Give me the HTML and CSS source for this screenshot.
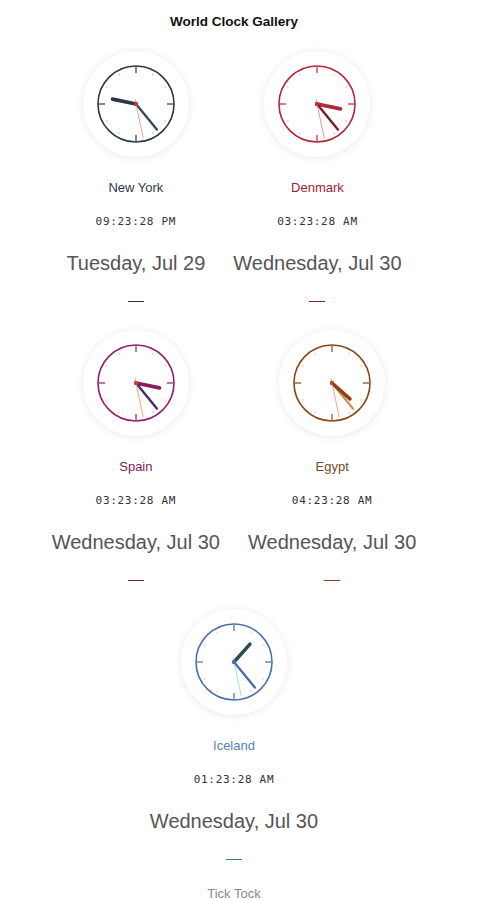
FILE: index.html
```html
<!DOCTYPE html>
<html lang="en">
<head>
<meta charset="utf-8">
<title>World Clock Gallery</title>
<link rel="stylesheet" href="styles.css">
</head>
<body>
<main class="page">
  <h1 class="title">World Clock Gallery</h1>
  <section class="gallery">

    <article class="card ny">
      <div class="clock">
        <svg class="dial" width="78" height="78" viewBox="-39 -39 78 78">
          <circle class="face" r="38"/>
          <g class="major"><line y1="-31" y2="-37"/><line y1="-31" y2="-37" transform="rotate(90)"/><line y1="-31" y2="-37" transform="rotate(180)"/><line y1="-31" y2="-37" transform="rotate(270)"/></g>
          <g class="minor"><line y1="-33" y2="-35" transform="rotate(30)"/><line y1="-33" y2="-35" transform="rotate(60)"/><line y1="-33" y2="-35" transform="rotate(120)"/><line y1="-33" y2="-35" transform="rotate(150)"/><line y1="-33" y2="-35" transform="rotate(210)"/><line y1="-33" y2="-35" transform="rotate(240)"/><line y1="-33" y2="-35" transform="rotate(300)"/><line y1="-33" y2="-35" transform="rotate(330)"/></g>
          <line class="hour" y2="-24" transform="rotate(281.7)"/>
          <line class="minute" y2="-33" transform="rotate(140.8)"/>
          <line class="second" y1="5" y2="-35" transform="rotate(168)"/>
          <circle class="pin" r="2.2"/>
        </svg>
      </div>
      <div class="name">New York</div>
      <div class="time">09:23:28 PM</div>
      <div class="date">Tuesday, Jul 29</div>
      <div class="dash"></div>
    </article>

    <article class="card dk">
      <div class="clock">
        <svg class="dial" width="78" height="78" viewBox="-39 -39 78 78">
          <circle class="face" r="38"/>
          <g class="major"><line y1="-31" y2="-37"/><line y1="-31" y2="-37" transform="rotate(90)"/><line y1="-31" y2="-37" transform="rotate(180)"/><line y1="-31" y2="-37" transform="rotate(270)"/></g>
          <g class="minor"><line y1="-33" y2="-35" transform="rotate(30)"/><line y1="-33" y2="-35" transform="rotate(60)"/><line y1="-33" y2="-35" transform="rotate(120)"/><line y1="-33" y2="-35" transform="rotate(150)"/><line y1="-33" y2="-35" transform="rotate(210)"/><line y1="-33" y2="-35" transform="rotate(240)"/><line y1="-33" y2="-35" transform="rotate(300)"/><line y1="-33" y2="-35" transform="rotate(330)"/></g>
          <line class="hour" y2="-24" transform="rotate(101.7)"/>
          <line class="minute" y2="-33" transform="rotate(140.8)"/>
          <line class="second" y1="5" y2="-35" transform="rotate(168)"/>
          <circle class="pin" r="2.2"/>
        </svg>
      </div>
      <div class="name">Denmark</div>
      <div class="time">03:23:28 AM</div>
      <div class="date">Wednesday, Jul 30</div>
      <div class="dash"></div>
    </article>

    <article class="card es">
      <div class="clock">
        <svg class="dial" width="78" height="78" viewBox="-39 -39 78 78">
          <circle class="face" r="38"/>
          <g class="major"><line y1="-31" y2="-37"/><line y1="-31" y2="-37" transform="rotate(90)"/><line y1="-31" y2="-37" transform="rotate(180)"/><line y1="-31" y2="-37" transform="rotate(270)"/></g>
          <g class="minor"><line y1="-33" y2="-35" transform="rotate(30)"/><line y1="-33" y2="-35" transform="rotate(60)"/><line y1="-33" y2="-35" transform="rotate(120)"/><line y1="-33" y2="-35" transform="rotate(150)"/><line y1="-33" y2="-35" transform="rotate(210)"/><line y1="-33" y2="-35" transform="rotate(240)"/><line y1="-33" y2="-35" transform="rotate(300)"/><line y1="-33" y2="-35" transform="rotate(330)"/></g>
          <line class="hour" y2="-24" transform="rotate(101.7)"/>
          <line class="minute" y2="-33" transform="rotate(140.8)"/>
          <line class="second" y1="5" y2="-35" transform="rotate(168)"/>
          <circle class="pin" r="2.2"/>
        </svg>
      </div>
      <div class="name">Spain</div>
      <div class="time">03:23:28 AM</div>
      <div class="date">Wednesday, Jul 30</div>
      <div class="dash"></div>
    </article>

    <article class="card eg">
      <div class="clock">
        <svg class="dial" width="78" height="78" viewBox="-39 -39 78 78">
          <circle class="face" r="38"/>
          <g class="major"><line y1="-31" y2="-37"/><line y1="-31" y2="-37" transform="rotate(90)"/><line y1="-31" y2="-37" transform="rotate(180)"/><line y1="-31" y2="-37" transform="rotate(270)"/></g>
          <g class="minor"><line y1="-33" y2="-35" transform="rotate(30)"/><line y1="-33" y2="-35" transform="rotate(60)"/><line y1="-33" y2="-35" transform="rotate(120)"/><line y1="-33" y2="-35" transform="rotate(150)"/><line y1="-33" y2="-35" transform="rotate(210)"/><line y1="-33" y2="-35" transform="rotate(240)"/><line y1="-33" y2="-35" transform="rotate(300)"/><line y1="-33" y2="-35" transform="rotate(330)"/></g>
          <line class="minute" y2="-33" transform="rotate(140.8)"/>
          <line class="hour" y2="-24" transform="rotate(131.7)"/>
          <line class="second" y1="5" y2="-35" transform="rotate(168)"/>
          <circle class="pin" r="2.2"/>
        </svg>
      </div>
      <div class="name">Egypt</div>
      <div class="time">04:23:28 AM</div>
      <div class="date">Wednesday, Jul 30</div>
      <div class="dash"></div>
    </article>

    <article class="card is">
      <div class="clock">
        <svg class="dial" width="78" height="78" viewBox="-39 -39 78 78">
          <circle class="face" r="38"/>
          <g class="major"><line y1="-31" y2="-37"/><line y1="-31" y2="-37" transform="rotate(90)"/><line y1="-31" y2="-37" transform="rotate(180)"/><line y1="-31" y2="-37" transform="rotate(270)"/></g>
          <g class="minor"><line y1="-33" y2="-35" transform="rotate(30)"/><line y1="-33" y2="-35" transform="rotate(60)"/><line y1="-33" y2="-35" transform="rotate(120)"/><line y1="-33" y2="-35" transform="rotate(150)"/><line y1="-33" y2="-35" transform="rotate(210)"/><line y1="-33" y2="-35" transform="rotate(240)"/><line y1="-33" y2="-35" transform="rotate(300)"/><line y1="-33" y2="-35" transform="rotate(330)"/></g>
          <line class="hour" y2="-24" transform="rotate(41.7)"/>
          <line class="minute" y2="-33" transform="rotate(140.8)"/>
          <line class="second" y1="5" y2="-35" transform="rotate(168)"/>
          <circle class="pin" r="2.2"/>
        </svg>
      </div>
      <div class="name">Iceland</div>
      <div class="time">01:23:28 AM</div>
      <div class="date">Wednesday, Jul 30</div>
      <div class="dash"></div>
    </article>

  </section>
  <footer class="footer">Tick Tock</footer>
</main>
</body>
</html>
```

FILE: styles.css
```css
html, body {
  margin: 0;
  padding: 0;
  background: #ffffff;
}

body {
  font-family: "Liberation Sans", Arial, sans-serif;
  color: #333333;
  overflow: hidden;
}

.page {
  width: 468px;
  text-align: center;
}

.title {
  margin: 0;
  padding-top: 14px;
  font-size: 13.5px;
  line-height: 16px;
  font-weight: bold;
  color: #111111;
}

.gallery {
  margin-top: 21px;
  display: flex;
  flex-wrap: wrap;
  justify-content: center;
}

.card {
  display: flex;
  flex-direction: column;
  align-items: center;
  padding: 0 14px 28px;
}

.clock {
  width: 106px;
  height: 106px;
  border-radius: 50%;
  background: #ffffff;
  box-shadow: 0 1px 9px rgba(0, 0, 0, 0.09);
  display: flex;
  align-items: center;
  justify-content: center;
}

.dial {
  display: block;
  overflow: visible;
}

.face {
  fill: #ffffff;
  stroke: var(--rim);
  stroke-width: 1.6;
}

.major line {
  stroke: var(--rim);
  stroke-width: 2;
  opacity: 0.6;
}

.minor line {
  stroke: var(--rim);
  stroke-width: 1;
  opacity: 0.3;
}

.hour {
  stroke: var(--hour);
  stroke-width: 3.6;
  stroke-linecap: round;
}

.minute {
  stroke: var(--minute);
  stroke-width: 2.4;
  stroke-linecap: round;
}

.second {
  stroke: var(--second);
  stroke-width: 1;
}

.pin {
  fill: var(--pin);
}

.name {
  margin-top: 23px;
  font-size: 13px;
  line-height: 16px;
  color: var(--label);
}

.time {
  margin-top: 19px;
  font-family: "DejaVu Sans Mono", "Liberation Mono", monospace;
  font-size: 11px;
  letter-spacing: 0.7px;
  line-height: 14px;
  color: #333333;
}

.date {
  margin-top: 22px;
  font-size: 20px;
  line-height: 24px;
  color: #555555;
  white-space: nowrap;
}

.dash {
  margin-top: 26px;
  width: 16px;
  height: 1px;
  background: var(--dash);
}

.footer {
  margin-top: -1px;
  font-size: 13px;
  line-height: 14px;
  color: #8a8a8a;
}

/* Per-city palettes */
.ny {
  --rim: #2d3748;
  --hour: #2d3748;
  --minute: #3c4859;
  --second: #f2a497;
  --pin: #b5403a;
  --label: #2d3748;
  --dash: #2d3748;
}

.dk {
  --rim: #b0283a;
  --hour: #b0283a;
  --minute: #7a1c28;
  --second: #e49aa2;
  --pin: #c0303f;
  --label: #9b2335;
  --dash: #7b2340;
}

.es {
  --rim: #8e1f6e;
  --hour: #8e1b5e;
  --minute: #4b2a6b;
  --second: #f2aa74;
  --pin: #c2454a;
  --label: #7a1f5c;
  --dash: #7b2352;
}

.eg {
  --rim: #8b4513;
  --hour: #8b4513;
  --minute: #c9965a;
  --second: #f4a09a;
  --pin: #a0522d;
  --label: #7a4a22;
  --dash: #8b3a2e;
}

.is {
  --rim: #4a70a8;
  --hour: #2f4f4f;
  --minute: #4a70a8;
  --second: #a8dce6;
  --pin: #4a70a8;
  --label: #5b7fb5;
  --dash: #4a70a8;
}
```
